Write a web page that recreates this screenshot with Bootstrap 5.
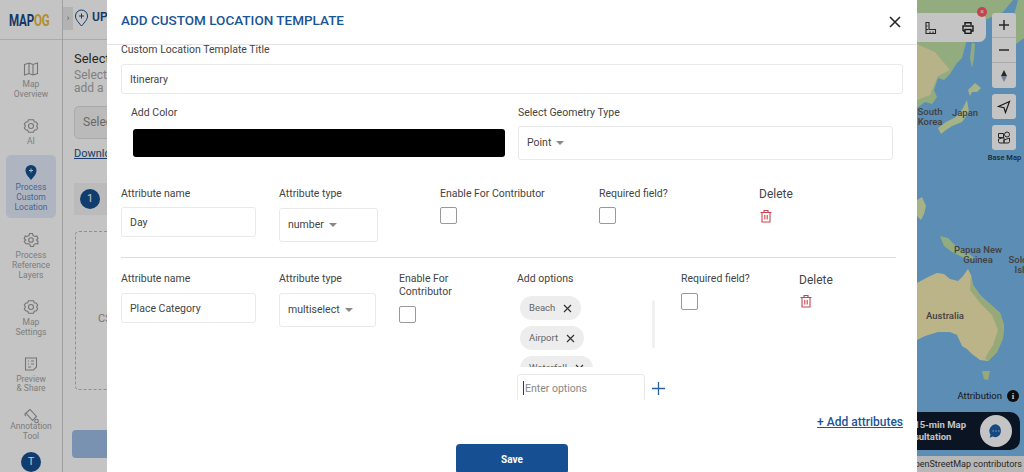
<!DOCTYPE html>
<html lang="en">
<head>
<meta charset="utf-8">
<title>Add custom location template</title>
<link href="https://cdn.jsdelivr.net/npm/bootstrap@5.3.0/dist/css/bootstrap.min.css" rel="stylesheet">
<style>
html,body{height:472px;overflow:hidden;margin:0}
body{font-family:Roboto,"Liberation Sans",sans-serif;color:#333;background:#fff}
.stage{position:relative;width:1024px;height:472px;overflow:hidden}
/* page behind the dialog */
.sidebar{width:63px;height:472px;border-right:1px solid #d0d0d0;flex:none}
.logo-area{height:40px;border-bottom:1px solid #ddd;padding-left:9px;line-height:40px;white-space:nowrap}
.logo-word{display:inline-block;font-weight:700;font-size:17px;color:#1b4a86;transform:scaleX(.68);transform-origin:left center;letter-spacing:-.2px}
.logo-word b{color:#e8b93a;font-weight:700}
.snav{width:50px;margin-left:6px;text-align:center;font-size:8.5px;line-height:9.7px;color:#a4a4a4;display:flex;flex-direction:column;align-items:center}
.snav svg{width:16px;height:16px;margin-bottom:3px;flex:none}
.g1{margin-top:21px}.g2{margin-top:19px}.g3{margin-top:8px;background:#e4ecfa;border-radius:5px;padding:9px 0;height:63px;color:#5f84bb}.g4{margin-top:14px}.g5{margin-top:19px}.g6{margin-top:18px}.g7{margin-top:14px}
.g7 svg{margin-bottom:-2px}
.avatar{width:20px;height:20px;border-radius:50%;background:#164f92;color:#fff;font-size:11px;line-height:20px;text-align:center;margin:11px 0 0 21px}
.mainpane{flex:1 1 auto;min-width:0;height:472px}
.topbar{height:40px;border-bottom:1px solid #ddd;white-space:nowrap}
.chev{width:10px;height:23px;margin-top:7px;background:#e9e9e9;color:#777;font-size:9px;text-align:center;line-height:23px}
.pinmark{margin:9px 0 0 1px}
.upl{font-size:12px;font-weight:600;color:#1b4a86;margin-left:3px}
.pane-body{padding:12px 12px 0 11px;width:500px}
.pane-h{font-size:13px;line-height:14px;color:#333}
.pane-sub{font-size:12px;line-height:13px;color:#a8a8a8;margin-top:3px}
.pane-sel{height:33px;width:220px;border-radius:5px;border:1px solid #ddd;background:#f3f3f3;color:#888;font-size:12px;line-height:31px;padding-left:8px;margin-top:11px}
.pane-link{font-size:11px;color:#234f8c;text-decoration:underline;margin-top:8px;line-height:13px}
.stepline{height:32px;margin-top:23px;background:#f4f4f4;padding-left:6px;display:flex;align-items:center}
.stepnum{width:20px;height:20px;border-radius:50%;background:#164f92;color:#fff;font-size:11px;line-height:20px;text-align:center}
.dropz{height:159px;border:1px dashed #bbb;border-radius:4px;margin-top:16px;margin-left:1px;font-size:11px;color:#999;padding:79px 0 0 22px}
.pane-btn{height:28px;width:300px;border-radius:4px;background:#9fbfe8;margin-top:40px;margin-left:-2px}
.mappane{width:107px;flex:none;height:472px;position:relative}
.mapsvg{display:block;width:107px;height:472px}
.mapsvg text{font-family:Roboto,"Liberation Sans",sans-serif;font-size:9.5px;font-weight:500;fill:#555;text-anchor:middle}
.tools{position:absolute;left:-20px;top:13px;width:89px;height:29px;background:#fff;border-radius:0 7px 7px 0;display:flex;justify-content:flex-end;align-items:center;gap:24px;padding-right:11px}
.tools svg{width:14px;height:14px}
.redx{position:absolute;left:60px;top:7px;width:10px;height:10px;border-radius:50%;background:#ff5a5f;color:#fff;font-size:7px;line-height:10px;text-align:center}
.ctrls{position:absolute;left:75px;top:13px;width:24px;display:flex;flex-direction:column;gap:6px}
.ctrl-stack{background:#fff;border-radius:3px;overflow:hidden}
.ctrl{height:25px;display:flex;align-items:center;justify-content:center;border-bottom:1px solid #ddd}
.ctrl:last-child{border-bottom:0}
.ctrl svg{width:14px;height:14px}
.basetxt{position:absolute;left:65px;top:153px;width:45px;text-align:center;font-size:7.5px;line-height:10px;color:#234;font-weight:500;white-space:nowrap}
.attrib{position:absolute;right:5px;top:389px;display:flex;align-items:center;gap:5px;font-size:9.5px;color:#222;line-height:14px}
.infoc{width:12px;height:12px;border-radius:50%;background:#111;color:#fff;font:700 9px/12px "Liberation Serif",serif;text-align:center}
.promo{position:absolute;left:-40px;top:412px;width:143px;height:38px;border-radius:0 10px 10px 0;background:#0d1b2e;color:#fff;font-size:9.5px;font-weight:700;line-height:12px;display:flex;align-items:center;justify-content:space-between;padding:0 8px 0 20px;white-space:nowrap}
.chatc{width:32px;height:32px;border-radius:50%;background:#fff;display:flex;align-items:center;justify-content:center}
.osm{position:absolute;left:-40px;right:0;top:456px;height:16px;background:#eee;font-size:9px;line-height:16px;color:#333;text-align:right;padding-right:2px;white-space:nowrap}
.dim{position:absolute;inset:0;background:rgba(0,0,0,.23)}
/* dialog */
.tdialog{position:absolute;left:107px;top:0;width:810px;height:472px;background:#fff;display:flex;flex-direction:column;overflow:hidden}
.thead{height:45px;flex:none;border-bottom:1px solid #e4e4e4;display:flex;align-items:center;justify-content:space-between;padding:0 16px 4px 14px}
.ttl{margin:0;font-size:13.5px;font-weight:500;color:#1c5596;line-height:16px}
.xbtn{width:12px;height:12px;padding:0;border:0;background:none;display:block;line-height:0;margin-top:3px}
.tbody{flex:1 1 auto;min-height:0;overflow:hidden;padding:0 14px;position:relative}
.flbl{font-size:10.5px;line-height:13px;color:#444;display:block;margin:0}
.ctl{height:30px;border:1px solid #e9e9e9;border-radius:3px;font-size:10.5px;color:#444;padding:0 8px;box-shadow:none;background:#fff;min-height:0}
.sel-box{height:34px;border:1px solid #e9e9e9;border-radius:3px;font-size:10.5px;color:#444;padding:0 8px;display:flex;align-items:center;gap:5px}
.sel-box i{display:block;width:0;height:0;border:4px solid transparent;border-top:4px solid #888;border-bottom:0}
.title-row{margin-top:-2px}
.title-row .ctl{width:782px;margin-top:8px}
.color-row{margin-top:12px;padding-left:10px}
.color-a{width:387px}
.swatch{width:372px;height:28px;background:#000;border-radius:3px;margin:10px 0 0 2px}
.color-b .sel-box{width:375px;margin-top:7px}
.attr1{margin-top:27px}
.attr2{padding-top:14px}
.cn1{width:158px}.cn1 .ctl{width:135px;margin-top:7px}
.ct1{width:161px}.ct1 .sel-box{width:99px;margin-top:8px}
.ce1{width:159px}
.cr1{width:160px}
.form-check-input.cb[type=checkbox]{width:17px;height:17px;margin:7px 0 0;border:1px solid #999;border-radius:2px;float:none;display:block;background-color:#fff}
.del-lbl{font-size:12px;line-height:14px;color:#444}
.trash{width:14px;height:14px;display:block;margin:8px 0 0 0}
.sep{border:0;border-top:1px solid #dedede;opacity:1;margin:15px 7px 0 0;width:775px}
.ct2{width:120px}.ct2 .sel-box{width:97px;margin-top:8px}
.ce2{width:118px}
.form-check-input.cb.low{margin-top:8px}
.cn2 .ctl{margin-top:8px}
.co2{width:164px}
.cr2{width:118px}
.form-check-input.cb.mid{margin-top:8px}
.cd2 .del-lbl{margin-top:1px}
.cd2 .trash{margin-top:7px}
.opt-wrap{width:138px;height:78px;margin-top:11px;display:flex;justify-content:space-between}
.chips{height:71px;overflow:hidden;padding-left:3px;display:flex;flex-direction:column;align-items:flex-start;gap:6px}
.chipx{height:24px;border-radius:12px;background:#ededed;color:#666;font-size:9.5px;display:flex;align-items:center;gap:8px;padding:0 9px;flex:none}
.chipx svg{width:9px;height:9px}
.scrolly{width:3px;height:48px;background:#f1f1f1;margin-top:4px;border-radius:2px}
.opt-add{display:flex;align-items:flex-start;gap:6px;width:154px}
.opt-clip{height:26px;overflow:hidden;width:128px;flex:none;position:relative}
.opt-clip .ctl{width:128px;height:28px;padding-left:7px;font-size:10.5px}
.opt-clip .ctl::placeholder{color:#888}
.ibeam{position:absolute;left:6px;top:7px;width:1px;height:14px;background:#1b3a66}
.plusi{width:15px;height:15px;margin-top:7px;display:block}
.addattr{font-size:12px;font-weight:500;color:#1c5596;text-decoration:underline;line-height:15px}
.tfoot{padding:2px 14px 0;flex:none;height:65px}
.savebtn{width:112px;height:30px;padding:0;background:#164f92;border:0;border-radius:4px;color:#fff;font-size:10px;font-weight:700;margin-top:11px}
.savewrap{text-align:center}
</style>
</head>
<body>
<div class="stage d-flex">
  <nav class="sidebar">
    <div class="logo-area"><span class="logo-word">MAP<b>OG</b></span></div>
    <div class="snav g1"><svg viewBox="0 0 16 16" fill="none" stroke="#999" stroke-width="1.1"><path d="M1.5 3.5 6 2l4 1.500L14.500 2v10.500L10 14l-4-1.500L1.500 14zM6 2v11M10 3.500V14"/></svg>Map<br>Overview</div>
    <div class="snav g2"><svg viewBox="0 0 16 16" fill="none" stroke="#999" stroke-width="1.1"><path d="M5.500 1.800h5l.8 2 2.100.4 1.300 1.800-1.100 2 1.100 2-1.300 1.800-2.100.4-.8 2h-5l-.8-2-2.100-.4L1.300 10l1.100-2-1.100-2 1.300-1.800 2.100-.4z"/><circle cx="8" cy="8" r="2.500"/></svg>AI</div>
    <div class="snav g3"><svg viewBox="0 0 16 16"><path d="M8 16C4.500 12 2.500 9.500 2.500 6.500a5.500 5.500 0 0 1 11 0C13.500 9.500 11.500 12 8 16z" fill="#164f92"/><path d="M8 4.500v4M6 6.500h4" stroke="#cfe" stroke-width="1"/></svg>Process<br>Custom<br>Location</div>
    <div class="snav g4"><svg viewBox="0 0 16 16" fill="none" stroke="#999" stroke-width="1.1"><path d="M6.500 1.500h3l.5 2 1.800 1 2-.5 1.200 2.500-1.500 1.500 1.500 1.500L14.800 12l-2-.5-1.800 1-.5 2h-3l-.5-2-1.800-1-2 .5L1.200 9.500 2.700 8 1.200 6.500 2.200 4l2 .5 1.800-1z"/><circle cx="8" cy="8" r="2.300"/></svg>Process<br>Reference<br>Layers</div>
    <div class="snav g5"><svg viewBox="0 0 16 16" fill="none" stroke="#999" stroke-width="1.100"><path d="M5.500 1.800h5l.8 2 2.100.4 1.300 1.800-1.100 2 1.100 2-1.300 1.800-2.100.4-.8 2h-5l-.8-2-2.100-.4L1.300 10l1.100-2-1.100-2 1.300-1.800 2.100-.4z"/><circle cx="8" cy="8" r="2.500"/></svg>Map<br>Settings</div>
    <div class="snav g6"><svg viewBox="0 0 16 16" fill="none" stroke="#999" stroke-width="1.100"><path d="M2.500 2h11v9l-3 3h-8z"/><path d="M5 5h1M8 5h3M5 8h1M8 8h3M5 11h3"/></svg>Preview<br>&amp; Share</div>
    <div class="snav g7"><svg viewBox="0 0 16 16" fill="none" stroke="#999" stroke-width="1.100"><path d="M3 5 7 1.500l6.500 7-4 4z"/><path d="M3 5c-1.500.5-1.500 2 0 3"/><circle cx="13.500" cy="13" r="1.800"/></svg>Annotation<br>Tool</div>
    <div class="avatar">T</div>
  </nav>
  <main class="mainpane">
    <div class="topbar d-flex align-items-start">
      <div class="chev">&rsaquo;</div>
      <svg class="pinmark" width="15" height="18" viewBox="0 0 15 18" fill="none" stroke="#1b4a86" stroke-width="1"><path d="M7.500 17C3.500 12.500 1.500 10 1.500 7a6 6 0 0 1 12 0c0 3-2 5.500-6 10z"/><path d="M7.500 4.500v5M5 7h5"/></svg>
      <span class="upl mt-2">UPLOAD</span>
    </div>
    <div class="pane-body">
      <div class="pane-h">Select Custom Location Template</div>
      <div class="pane-sub">Select a template from the list or<br>add a new custom template</div>
      <div class="pane-sel">Select template</div>
      <div class="pane-link">Download sample file</div>
      <div class="stepline"><span class="stepnum">1</span></div>
      <div class="dropz">CSV file</div>
      <div class="pane-btn"></div>
    </div>
  </main>
  <aside class="mappane">
    <svg class="mapsvg" viewBox="917 0 107 472" preserveAspectRatio="none">
      <rect x="917" y="0" width="107" height="472" fill="#78b8ea"/>
      <path d="M917 0H1013L1003 12 985 20 973 27 966 43 962 58 957 63 950 74 944 80 938 78 934 90 937 97 932 104 925 102 917 108z" fill="#bedfa6"/>
      <path d="M917 44 935 52 950 70 938 76 930 95 917 100z" fill="#efe8b0"/>
      <path d="M1024 0H1018L1010 30 1016 44 1024 38z" fill="#bedfa6"/>
      <path d="M972 42 975 44 974 58 972 68 970 58z" fill="#bedfa6"/>
      <path d="M968 90 975 83 981 88 977 92 972 92 970 96z" fill="#d9e9b0"/>
      <path d="M967 100 969 112 962 122 952 126 946 130 941 134 938 128 946 122 956 117 963 108z" fill="#d9e9b0"/>
      <path d="M917 200 922 197 926 206 924 214 921 220 917 216z" fill="#d9e9b0"/>
      <path d="M940 236 948 238 957 247 968 253 977 260 964 258 952 252 944 246z" fill="#bedfa6"/>
      <path d="M917 283 928 277 937 273 944 274 950 279 958 281 963 276 968 269 971 275 973 285 980 295 990 304 1000 313 1004 325 1003 338 997 352 988 361 980 360 972 354 967 349 962 346 957 335 950 332 938 332 925 336 917 340z" fill="#f4eab3"/>
      <path d="M971 275 973 285 980 295 990 304 1000 313 1004 325 1003 338 997 352 988 361 985 358 993 345 998 330 992 315 980 303 970 290z" fill="#c6dc9e"/>
      <path d="M982 371 990 371 988 380 984 379z" fill="#c6dc9e"/>
      <text x="930" y="115">South</text><text x="930" y="125">Korea</text>
      <text x="965" y="116">Japan</text>
      <text x="978" y="253">Papua New</text><text x="978" y="263">Guinea</text>
      <text x="1018" y="263">Solo</text><text x="1022" y="273">Isla</text>
      <text x="945" y="319">Australia</text>
    </svg>
    <div class="tools">
      <svg viewBox="0 0 14 14" fill="none" stroke="#333" stroke-width="1.100"><path d="M3 1.500h3v7h6.500v4H3zM3 8.500h2M3 5h1.500M7 12v-1.500M10 12v-1.500"/></svg>
      <svg viewBox="0 0 14 14" fill="none" stroke="#222" stroke-width="1.400"><path d="M4 4V1.800h6V4M2 10V5h10v5h-2M4 10h-2"/><rect x="4" y="8.500" width="6" height="3.800"/></svg>
    </div>
    <div class="redx">&times;</div>
    <div class="ctrls">
      <div class="ctrl-stack">
        <div class="ctrl"><svg viewBox="0 0 14 14" stroke="#333" stroke-width="1.500"><path d="M2 7h10M7 2v10"/></svg></div>
        <div class="ctrl"><svg viewBox="0 0 14 14" stroke="#333" stroke-width="1.500"><path d="M2 7h10"/></svg></div>
        <div class="ctrl"><svg viewBox="0 0 14 14"><path d="M7 1l3 6H4z" fill="#333"/><path d="M7 13l3-6H4z" fill="#9ab"/></svg></div>
      </div>
      <div class="ctrl-stack"><div class="ctrl"><svg viewBox="0 0 14 14" fill="none" stroke="#222" stroke-width="1.200"><path d="M12.500 1.500 1.500 6.500l5.500 1.200 1.500 4.800z"/></svg></div></div>
      <div class="ctrl-stack"><div class="ctrl"><svg viewBox="0 0 14 14" fill="none" stroke="#333" stroke-width="1"><path d="M1.500 2.500h5v4h-5zM1.500 8 7 6.500v5.500H3a1.500 1.500 0 0 1-1.500-1.500zM7 9l5.500-2v3.500a1.500 1.500 0 0 1-1.500 1.500H7z"/><circle cx="10" cy="3.500" r="2.500"/></svg></div></div>
    </div>
    <div class="basetxt">Base Map</div>
    <div class="attrib">Attribution <span class="infoc">i</span></div>
    <div class="promo"><span>Get 15-min Map<br>Consultation</span><span class="chatc"><svg width="16" height="16" viewBox="0 0 14 14"><path d="M7 1a6 6 0 0 1 0 11.500c-1 0-2-.2-2.800-.6L1.500 13l.7-2.700A6 6 0 0 1 7 1z" fill="#1d5fa8"/><path d="M4 7h1M6.500 7h1M9 7h1" stroke="#fff"/></svg></span></div>
    <div class="osm">OpenStreetMap contributors</div>
  </aside>
  <div class="dim"></div>

  <section class="tdialog">
    <header class="thead">
      <h5 class="ttl">ADD CUSTOM LOCATION TEMPLATE</h5>
      <button class="xbtn" type="button" aria-label="Close"><svg width="12" height="12" viewBox="0 0 12 12" stroke="#222" stroke-width="1.500"><path d="M1 1l10 10M11 1 1 11"/></svg></button>
    </header>
    <div class="tbody">
      <div class="title-row">
        <label class="flbl">Custom Location Template Title</label>
        <input class="form-control ctl" value="Itinerary">
      </div>
      <div class="color-row d-flex">
        <div class="color-a"><label class="flbl">Add Color</label><div class="swatch"></div></div>
        <div class="color-b"><label class="flbl">Select Geometry Type</label><div class="sel-box">Point <i></i></div></div>
      </div>
      <div class="attr1 d-flex">
        <div class="cn1"><label class="flbl">Attribute name</label><input class="form-control ctl" value="Day"></div>
        <div class="ct1"><label class="flbl">Attribute type</label><div class="sel-box">number <i></i></div></div>
        <div class="ce1"><label class="flbl">Enable For Contributor</label><input class="form-check-input cb" type="checkbox"></div>
        <div class="cr1"><label class="flbl">Required field?</label><input class="form-check-input cb" type="checkbox"></div>
        <div><div class="del-lbl">Delete</div><svg class="trash" viewBox="0 0 14 14" fill="none" stroke="#c8434f" stroke-width="1.100"><path d="M1.500 3.500h11M5 3.500V1.500h4v2M3 3.500v9.500h8V3.500M5.800 6v4.500M8.200 6v4.500"/></svg></div>
      </div>
      <hr class="sep">
      <div class="attr2 d-flex">
        <div class="cn1 cn2"><label class="flbl">Attribute name</label><input class="form-control ctl" value="Place Category"></div>
        <div class="ct2"><label class="flbl">Attribute type</label><div class="sel-box">multiselect <i></i></div></div>
        <div class="ce2"><label class="flbl">Enable For<br>Contributor</label><input class="form-check-input cb low" type="checkbox"></div>
        <div class="co2">
          <label class="flbl">Add options</label>
          <div class="opt-wrap">
            <div class="chips">
              <span class="chipx">Beach <svg viewBox="0 0 9 9" stroke="#333" stroke-width="1.200"><path d="M1 1l7 7M8 1 1 8"/></svg></span>
              <span class="chipx">Airport <svg viewBox="0 0 9 9" stroke="#333" stroke-width="1.200"><path d="M1 1l7 7M8 1 1 8"/></svg></span>
              <span class="chipx">Waterfall <svg viewBox="0 0 9 9" stroke="#333" stroke-width="1.200"><path d="M1 1l7 7M8 1 1 8"/></svg></span>
            </div>
            <div class="scrolly"></div>
          </div>
          <div class="opt-add">
            <div class="opt-clip"><input class="form-control ctl" placeholder="Enter options"><span class="ibeam"></span></div>
            <svg class="plusi" viewBox="0 0 15 15" stroke="#2c619f" stroke-width="1.300"><path d="M1 7.500h13M7.500 1v13"/></svg>
          </div>
        </div>
        <div class="cr2"><label class="flbl">Required field?</label><input class="form-check-input cb mid" type="checkbox"></div>
        <div class="cd2"><div class="del-lbl">Delete</div><svg class="trash" viewBox="0 0 14 14" fill="none" stroke="#c8434f" stroke-width="1.100"><path d="M1.500 3.500h11M5 3.500V1.500h4v2M3 3.500v9.500h8V3.500M5.800 6v4.500M8.200 6v4.500"/></svg></div>
      </div>
    </div>
    <footer class="tfoot">
      <div class="text-end"><a class="addattr" href="#">+ Add attributes</a></div>
      <div class="savewrap"><button class="btn savebtn" type="button">Save</button></div>
    </footer>
  </section>
</div>
<script src="https://cdn.jsdelivr.net/npm/bootstrap@5.3.0/dist/js/bootstrap.bundle.min.js"></script>
</body>
</html>
